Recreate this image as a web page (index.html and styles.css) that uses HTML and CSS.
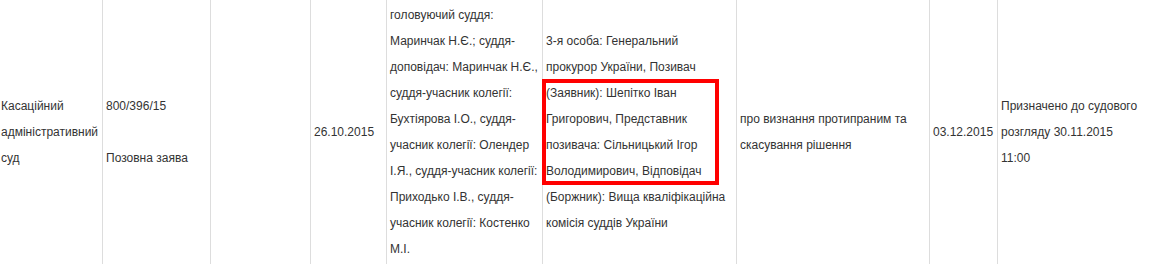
FILE: index.html
```html
<!DOCTYPE html>
<html lang="uk">
<head>
<meta charset="utf-8">
<link rel="stylesheet" href="styles.css">
</head>
<body>
<div class="page">
  <table class="cases">
    <colgroup>
      <col class="c1"><col class="c2"><col class="c3"><col class="c4"><col class="c5"><col class="c6"><col class="c7"><col class="c8"><col class="c9">
    </colgroup>
    <tbody>
      <tr>
        <td>Касаційний адміністративний суд</td>
        <td>800/396/15<br><br>Позовна заява</td>
        <td></td>
        <td>26.10.2015</td>
        <td>головуючий суддя: Маринчак Н.Є.; суддя-доповідач: Маринчак Н.Є., суддя-учасник колегії: Бухтіярова І.О., суддя-учасник колегії: Олендер І.Я., суддя-учасник колегії: Приходько І.В., суддя-учасник колегії: Костенко М.І.</td>
        <td class="parties">3-я особа: Генеральний прокурор України, Позивач (Заявник): Шепітко Іван Григорович, Представник позивача: Сільницький Ігор Володимирович, Відповідач (Боржник): Вища кваліфікаційна комісія суддів України</td>
        <td>про визнання протипраним та скасування рішення</td>
        <td>03.12.2015</td>
        <td class="status">Призначено до судового розгляду 30.11.2015 11:00</td>
      </tr>
    </tbody>
  </table>
  <div class="highlight"></div>
</div>
</body>
</html>
```

FILE: styles.css
```css
html, body {
  margin: 0;
  padding: 0;
  background: #fff;
  overflow: hidden;
}
.page {
  position: relative;
  width: 1150px;
  height: 264px;
  overflow: hidden;
}
.cases {
  border-collapse: collapse;
  table-layout: fixed;
  width: 1155px;
  margin: -7px 0 0 -3px;
  font-family: "Liberation Sans", Arial, sans-serif;
  font-size: 12px;
  line-height: 26px;
  color: #333;
}
.cases td {
  border: 1px solid #ddd;
  padding: 8px 2px 8px 3px;
  vertical-align: middle;
  text-align: left;
  word-wrap: break-word;
}
.cases td.parties {
  padding-right: 6px;
}
.cases td.status {
  padding-right: 11px;
}
.c1 { width: 105px; }
.c2 { width: 108px; }
.c3 { width: 100px; }
.c4 { width: 76px; }
.c5 { width: 156px; }
.c6 { width: 194px; }
.c7 { width: 193px; }
.c8 { width: 68px; }
.c9 { width: 155px; }
.highlight {
  position: absolute;
  left: 542px;
  top: 79px;
  width: 177px;
  height: 106px;
  box-sizing: border-box;
  border: 4px solid #f00;
}
```
